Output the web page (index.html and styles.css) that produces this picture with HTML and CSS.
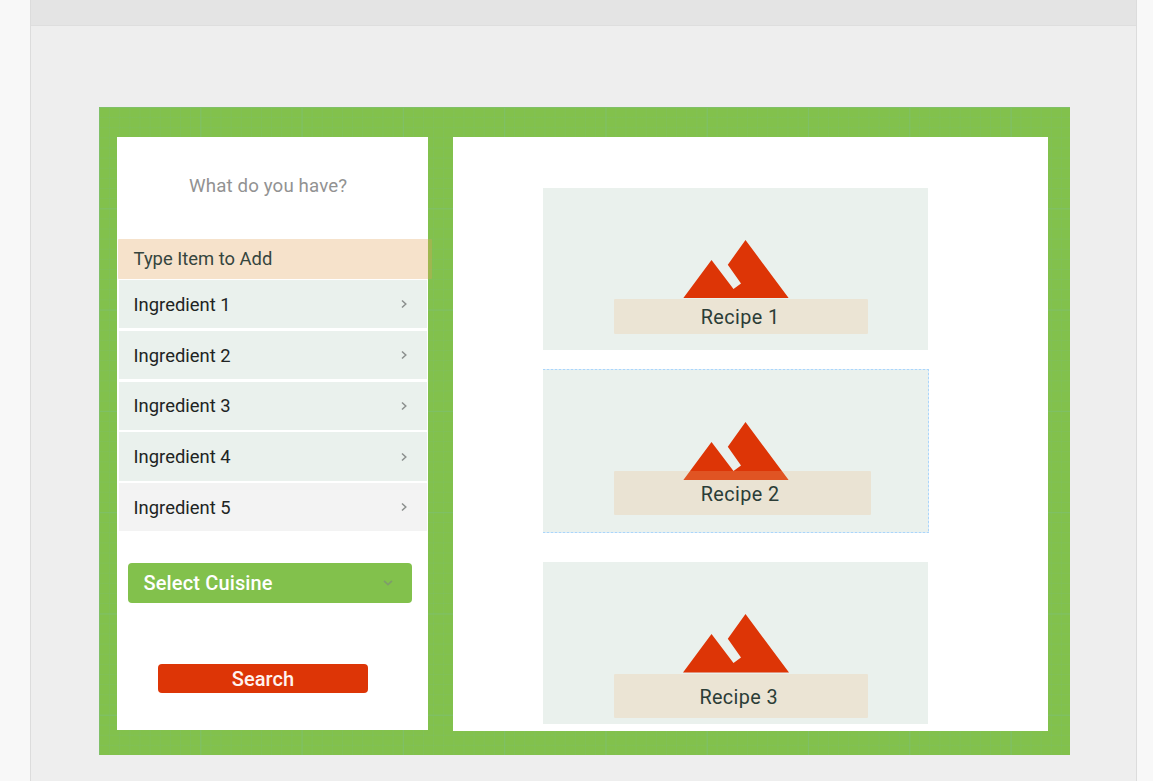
FILE: index.html
```html
<!DOCTYPE html>
<html lang="en">
<head>
<meta charset="utf-8">
<title>Recipe search</title>
<link rel="stylesheet" href="styles.css">
</head>
<body>
<div class="workspace">
  <div class="toolbar"></div>
  <main class="canvas">
    <section class="sidebar">
      <h1 class="question">What do you have?</h1>
      <div class="add-item">Type Item to Add</div>
      <ul class="ingredients">
        <li class="ingredient"><span>Ingredient 1</span><svg class="chevron" viewBox="0 0 6 8"><path d="M1 .5 4.8 4 1 7.5"/></svg></li>
        <li class="ingredient"><span>Ingredient 2</span><svg class="chevron" viewBox="0 0 6 8"><path d="M1 .5 4.8 4 1 7.5"/></svg></li>
        <li class="ingredient"><span>Ingredient 3</span><svg class="chevron" viewBox="0 0 6 8"><path d="M1 .5 4.8 4 1 7.5"/></svg></li>
        <li class="ingredient"><span>Ingredient 4</span><svg class="chevron" viewBox="0 0 6 8"><path d="M1 .5 4.8 4 1 7.5"/></svg></li>
        <li class="ingredient ingredient-muted"><span>Ingredient 5</span><svg class="chevron" viewBox="0 0 6 8"><path d="M1 .5 4.8 4 1 7.5"/></svg></li>
      </ul>
      <div class="cuisine"><span>Select Cuisine</span><svg class="caret" viewBox="0 0 10 6"><path d="M1 .8 5 4.6 9 .8"/></svg></div>
      <div class="search">Search</div>
    </section>
    <section class="results">
      <article class="card">
        <svg class="mountain" viewBox="0 0 106 58.5"><path d="M0 58.5 28.5 20 50.5 49 58 43.5 44.8 24.7 62.5 0 106 58.5Z"/></svg>
        <div class="label"><span>Recipe 1</span></div>
      </article>
      <article class="card card-selected">
        <svg class="mountain" viewBox="0 0 106 58.5"><path d="M0 58.5 28.5 20 50.5 49 58 43.5 44.8 24.7 62.5 0 106 58.5Z"/></svg>
        <div class="label"><span>Recipe 2</span></div>
      </article>
      <article class="card card-last">
        <svg class="mountain" viewBox="0 0 106 58.5"><path d="M0 58.5 28.5 20 50.5 49 58 43.5 44.8 24.7 62.5 0 106 58.5Z"/></svg>
        <div class="label"><span>Recipe 3</span></div>
      </article>
    </section>
  </main>
</div>
</body>
</html>
```
FILE: styles.css
```css
* { box-sizing: border-box; }
body {
  margin: 0;
  height: 781px;
  overflow: hidden;
  background: #f8f8f8;
  font-family: Roboto, "Liberation Sans", sans-serif;
}
.workspace {
  width: 1107px;
  height: 781px;
  margin-left: 30px;
  background: #eee;
  border: solid #dcdcdc;
  border-width: 0 1px;
}
.toolbar {
  height: 26px;
  background: #e4e4e4;
  border-bottom: 1px solid #dedede;
}
.canvas {
  display: flex;
  align-items: flex-start;
  gap: 25px;
  width: 971px;
  height: 648px;
  margin: 81px 0 0 68px;
  padding: 30.4px 22px 0 18px;
  background-color: #82c14c;
  background-image:
    linear-gradient(90deg, #7fc068 1px, transparent 1px),
    linear-gradient(#7fc068 1px, transparent 1px),
    linear-gradient(90deg, rgba(125, 191, 110, .3) 1px, transparent 1px),
    linear-gradient(rgba(125, 191, 110, .3) 1px, transparent 1px);
  background-size: 101.3px 101.3px, 101.3px 101.3px, 10.13px 10.13px, 10.13px 10.13px;
}
.sidebar {
  width: 311px;
  height: 593px;
  background: #fff;
}
.question {
  margin: 0;
  padding: 37px 0 0 72px;
  height: 101.6px;
  font-size: 18.7px;
  line-height: 24px;
  font-weight: 400;
  color: #929292;
  letter-spacing: .14px;
  white-space: nowrap;
}
.add-item {
  width: 314px;
  height: 40px;
  margin-left: 1px;
  padding-left: 15.6px;
  border-radius: 1px;
  background: rgba(227, 161, 88, .31);
  color: #35453e;
  font-size: 18.4px;
  line-height: 40px;
  position: relative;
}
.ingredients {
  display: grid;
  gap: 2.4px;
  margin: 1.2px 1px 0 2px;
  padding: 0;
  list-style: none;
}
.ingredient {
  display: flex;
  align-items: center;
  justify-content: space-between;
  height: 48.3px;
  padding: .3px 20px 0 14.6px;
  background: #eaf1ed;
  color: #212423;
  font-size: 18.4px;
}
.ingredient-muted { background: #f3f3f3; }
.chevron {
  width: 6px;
  height: 8px;
  overflow: visible;
  fill: none;
  stroke: #8b8f8d;
  stroke-width: 1.5;
}
.cuisine {
  display: flex;
  align-items: center;
  justify-content: space-between;
  width: 284px;
  height: 40.5px;
  margin: 31.5px 0 0 11px;
  padding: 0 19px 0 15.5px;
  border-radius: 4px;
  background: #82c14c;
  color: #fff;
  font-size: 20px;
  font-weight: 500;
  letter-spacing: .14px;
}
.caret {
  width: 10px;
  height: 6px;
  fill: none;
  stroke: #7f9d6b;
  stroke-width: 1.7;
}
.search {
  width: 210px;
  height: 29px;
  margin: 60.5px 0 0 41px;
  border-radius: 4px;
  background: #dd3506;
  color: #fff3ef;
  font-size: 20px;
  line-height: 30px;
  font-weight: 500;
  letter-spacing: .1px;
  text-align: center;
}
.results {
  width: 595px;
  height: 594px;
  padding: 50.6px 0 0 90.4px;
  background: #fff;
}
.card {
  width: 385px;
  height: 162px;
  padding: 52px 0 0 71px;
  background: #eaf1ed;
}
.card-selected {
  width: 386px;
  height: 164px;
  margin-top: 19.5px;
  padding-top: 52.5px;
  background:
    repeating-linear-gradient(90deg, #abd6fa 0 2px, #d9ebf8 2px 4px) top / 100% 1px no-repeat,
    repeating-linear-gradient(90deg, #abd6fa 0 2px, #d9ebf8 2px 4px) bottom / 100% 1px no-repeat,
    repeating-linear-gradient(#abd6fa 0 2px, #d9ebf8 2px 4px) right / 1px 100% no-repeat,
    #eaf1ed;
}
.card-last { margin-top: 29px; }
.mountain {
  display: block;
  width: 106px;
  height: 58.5px;
  margin-left: 68.2px;
  fill: #dd3506;
}
.label {
  width: 253.5px;
  height: 34.5px;
  margin-top: 1px;
  padding-left: 86.4px;
  border-radius: 1px;
  background: #ebe4d4;
  color: #2b3d37;
  font-size: 19.8px;
  line-height: 37px;
  letter-spacing: .4px;
}
.card-selected .label {
  position: relative;
  width: 257px;
  height: 44px;
  margin-top: -9px;
  background: rgba(236, 186, 130, .24);
  line-height: 47.5px;
}
.card-last .label {
  height: 44px;
  padding-left: 85px;
  line-height: 47px;
}
```
